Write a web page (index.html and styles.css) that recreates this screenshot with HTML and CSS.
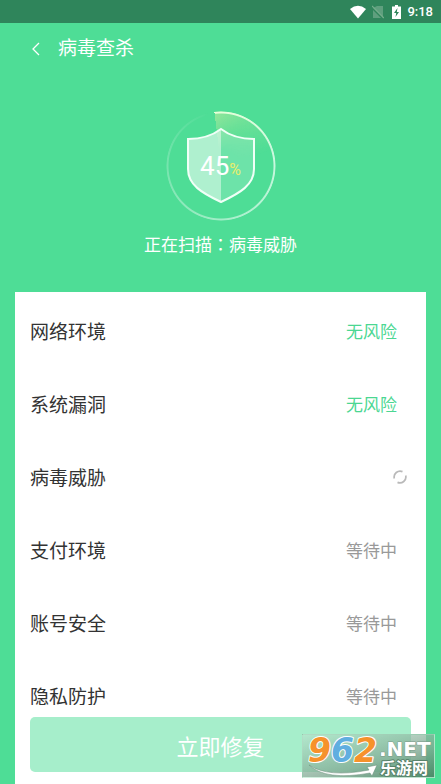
FILE: index.html
```html
<!DOCTYPE html>
<html lang="zh-CN">
<head>
<meta charset="utf-8">
<meta name="viewport" content="width=device-width, initial-scale=1">
<title>病毒查杀</title>
<link rel="stylesheet" href="styles.css">
</head>
<body>
<div class="status-bar">
  <svg width="16" height="14" viewBox="0 0 16 14" aria-hidden="true"><path d="M0 4Q8-2.500 16 4L8 13.500Z" fill="#fff"/></svg>
  <svg class="sim" width="12" height="14" viewBox="0 0 12 14" aria-hidden="true"><path d="M5 1H11V13L1 3ZM1 5L9 13H1Z" fill="#5f9f7e"/><path d="M0 1L12 13" stroke="#74ae8b" stroke-width="1.200"/></svg>
  <svg class="battery" width="9" height="14" viewBox="0 0 9 14" aria-hidden="true"><path d="M3 0H6V1.500H9V14H0V1.500H3Z" fill="#fff"/><path d="M5.500 3L2 8H4.200L3.500 12L7 7H4.800Z" fill="#2f855b"/></svg>
  <span>9:18</span>
</div>
<header class="title-bar">
  <button class="back" type="button" aria-label="返回"><svg width="10" height="14" viewBox="0 0 10 14"><path d="M8 1L2 7L8 13" fill="none" stroke="#fff" stroke-width="1.300"/></svg></button>
  <h1>病毒查杀</h1>
</header>
<main>
  <section class="scan">
    <div class="dial">
      <svg class="shield" width="70" height="78" viewBox="0 0 70 78" aria-hidden="true">
        <path d="M35 2Q22 12 2 12V42C2 58 16 66 35 75Z" fill="#fff" fill-opacity=".55"/>
        <path d="M35 2Q48 12 68 12V42C68 58 54 66 35 75Z" fill="#fff" fill-opacity=".18"/>
        <path d="M35 2Q22 12 2 12V42C2 58 16 66 35 75C54 66 68 58 68 42V12Q48 12 35 2Z" fill="none" stroke="#f0fff7" stroke-width="2"/>
      </svg>
      <p class="percent">45<span>%</span></p>
    </div>
    <p class="message">正在扫描<span class="colon" lang="zh-TW">：</span>病毒威胁</p>
  </section>
  <section class="panel">
    <ul class="checks">
      <li><span>网络环境</span><span class="state safe">无风险</span></li>
      <li><span>系统漏洞</span><span class="state safe">无风险</span></li>
      <li><span>病毒威胁</span><svg class="spinner" width="14" height="14" viewBox="0 0 14 14" role="img" aria-label="扫描中"><path d="M1.300 8.500A6 6 0 0 1 9.500 1.600M12.700 5.500A6 6 0 0 1 4.500 12.400" fill="none" stroke="#b9b9b9" stroke-width="1.700"/></svg></li>
      <li><span>支付环境</span><span class="state">等待中</span></li>
      <li><span>账号安全</span><span class="state">等待中</span></li>
      <li><span>隐私防护</span><span class="state">等待中</span></li>
    </ul>
    <button class="repair" type="button">立即修复</button>
  </section>
</main>
<div class="watermark">
  <svg width="133" height="44" viewBox="0 0 133 44" role="img" aria-label="962.NET 乐游网">
    <path d="M7 31Q26 44 67 36L65 33L75 31L70 42L68 39Q24 47 7 31Z" fill="#fff" stroke="#678c79" stroke-width=".5"/>
    <text class="digits" x="6" y="28"><tspan class="orange">9</tspan><tspan class="blue">6</tspan><tspan class="orange">2</tspan></text>
    <text class="domain" x="77" y="22">.NET</text>
    <text class="site" x="78" y="40">乐游网</text>
  </svg>
</div>
</body>
</html>
```
FILE: styles.css
```css
* { box-sizing: border-box; }
body {
  margin: 0;
  height: 100vh;
  display: flex;
  flex-direction: column;
  overflow: hidden;
  background: #4edd96;
  color: #333;
  font-family: Roboto, "Noto Sans CJK SC", sans-serif;
}
h1, p, ul { margin: 0; padding: 0; font-weight: 400; }
button { border: 0; padding: 0; font: inherit; color: #fff; }
.status-bar {
  flex: none;
  height: 23px;
  padding: 0 8px;
  display: flex;
  align-items: center;
  justify-content: flex-end;
  background: #2f855b;
  color: #fff;
  font-size: 13px;
  font-weight: 500;
}
.sim { margin-left: 6px; }
.battery { margin: 0 6px 0 8px; }
.title-bar {
  flex: none;
  height: 52px;
  padding-left: 24px;
  display: flex;
  align-items: center;
  color: #fff;
}
.back {
  width: 24px;
  height: 32px;
  display: grid;
  place-items: center;
  background: none;
}
.title-bar h1 { margin-left: 10px; font-size: 19px; line-height: 28px; }
main {
  flex: 1;
  min-height: 0;
  display: flex;
  flex-direction: column;
}
.scan {
  flex: none;
  height: 217px;
  padding-top: 36px;
  display: flex;
  flex-direction: column;
  align-items: center;
  color: #fff;
}
.dial {
  position: relative;
  width: 110px;
  height: 110px;
  display: grid;
  place-items: center;
}
.dial > * { grid-area: 1 / 1; }
.dial::before, .dial::after {
  content: "";
  position: absolute;
  inset: 0;
  border-radius: 50%;
}
.dial::before {
  background: conic-gradient(from -7deg, rgba(220, 240, 160, .45), rgba(220, 240, 160, .25) 30deg, transparent 80deg, transparent);
  mask: radial-gradient(circle closest-side, transparent 16px, #000 50px, #000 54px, transparent 55px);
}
.dial::after {
  background: conic-gradient(from -7deg, #e8ffd9, #c9f8df 90deg, rgba(255, 255, 255, .5) 180deg, rgba(255, 255, 255, .25) 270deg, rgba(255, 255, 255, .04) 345deg, transparent 353deg, transparent);
  mask: radial-gradient(circle closest-side, transparent 52px, #000 53px, #000 54px, transparent 55px);
}
.shield { position: relative; }
.percent { position: relative; padding-top: 4px; font-size: 26px; line-height: 32px; }
.percent span { color: #e9ed6b; font-size: 16px; }
.message { margin-top: 11px; font-size: 17px; line-height: 24px; }
.colon { font-family: "Noto Sans CJK TC", sans-serif; }
.panel {
  flex: 1;
  min-height: 0;
  margin: 0 15px;
  padding-bottom: 12px;
  display: flex;
  flex-direction: column;
  background: #fff;
}
.checks {
  flex: 1;
  min-height: 0;
  overflow: hidden;
  padding: 2px 29px 0 15px;
  list-style: none;
}
.checks li {
  height: 73px;
  display: flex;
  align-items: center;
  justify-content: space-between;
  font-size: 19px;
}
.state { font-size: 17px; color: #999; }
.safe { color: #4bd792; }
.spinner { margin-right: -10px; }
.repair {
  flex: none;
  height: 55px;
  margin: 12px 15px 0;
  border-radius: 5px;
  background: #a6eecb;
  font-size: 22px;
}
.watermark {
  position: absolute;
  right: 6px;
  bottom: 6px;
  height: 44px;
  border: 1px solid rgba(200, 240, 218, .6);
  background: linear-gradient(165deg, rgba(190, 225, 206, .5), rgba(130, 170, 148, .8) 60%, #4b8b69);
}
.watermark svg { display: block; margin: -1px; }
.watermark text { paint-order: stroke; stroke-linejoin: round; }
.digits {
  font: italic 700 33px "DejaVu Sans", sans-serif;
  stroke: #fff;
  stroke-width: 2px;
}
.orange { fill: #f6922b; }
.blue { fill: #60aee0; }
.domain {
  font: 700 20px "DejaVu Sans", sans-serif;
  fill: #fff;
  stroke: #7d9a8a;
  stroke-width: 1px;
}
.site {
  font: 700 16px "Noto Sans CJK SC", sans-serif;
  fill: #fff;
  stroke: #58836b;
  stroke-width: 2px;
}
```
